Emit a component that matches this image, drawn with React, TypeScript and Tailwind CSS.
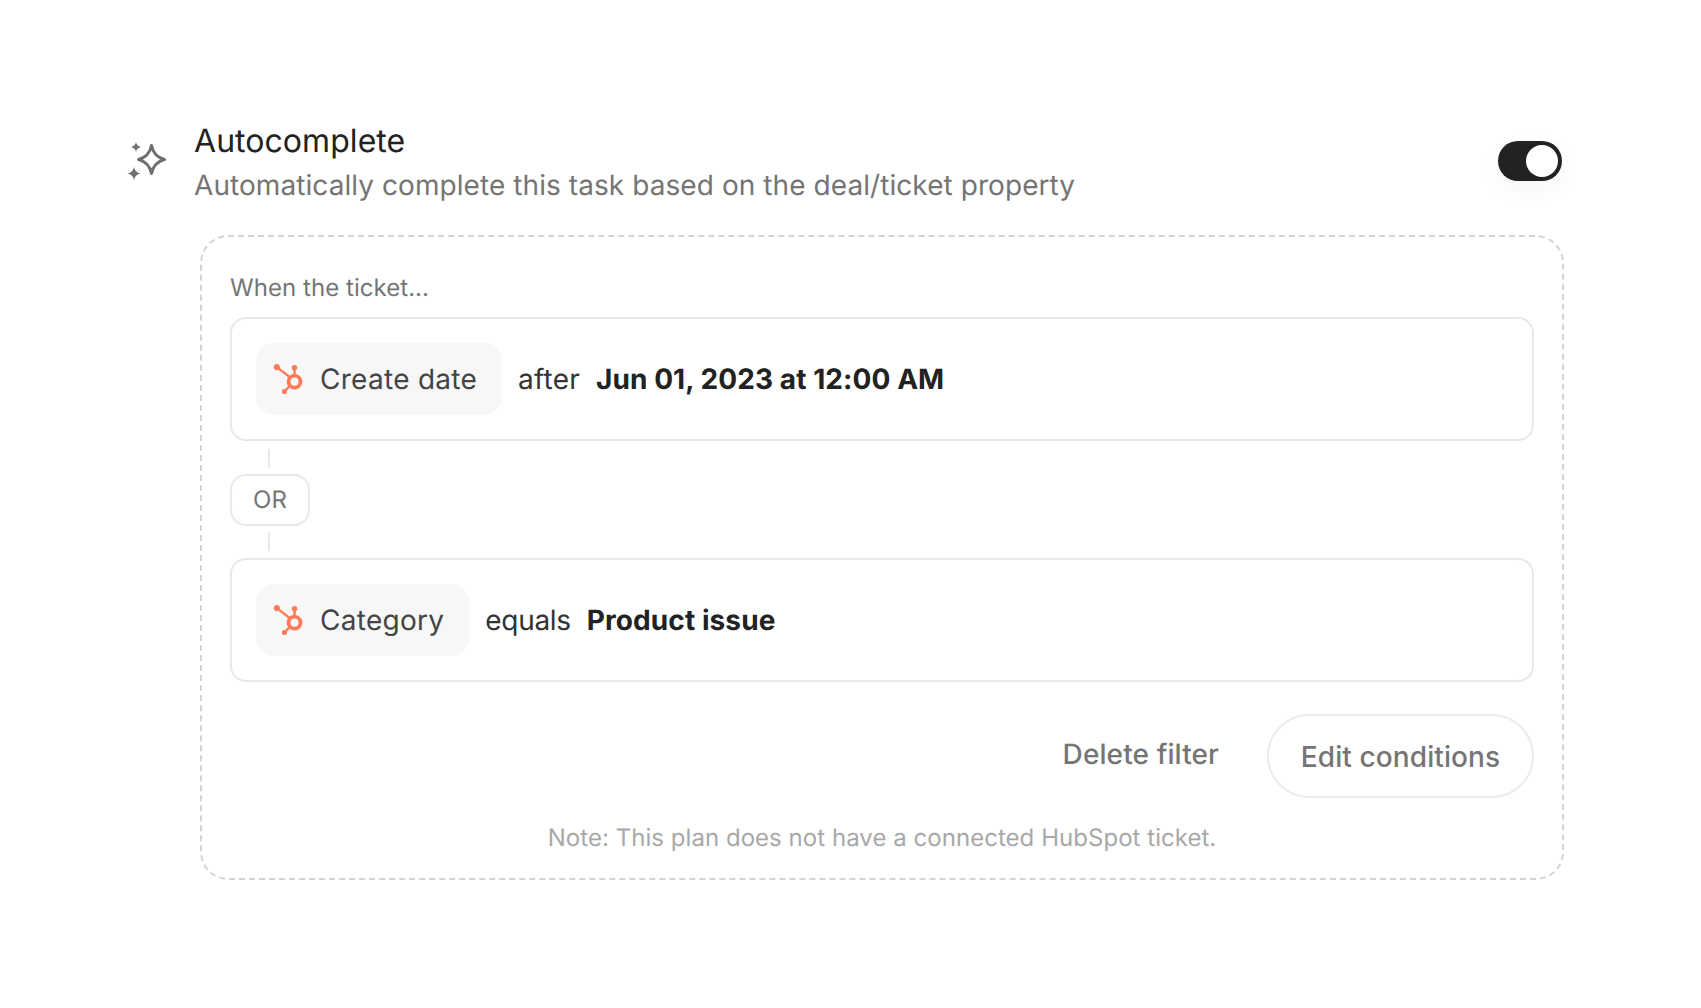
import React from 'react';
import { SiHubspot } from 'react-icons/si';

const Sparkle = () => (
  <svg width="40" height="40" viewBox="0 0 40 40" className="shrink-0 text-[#6f6f6f]">
    <path
      d="M24.500 4.500c1.500 7.500 5.500 12 13 14-7.500 2-11.500 6.500-13 14-1.500-7.500-5.500-12-13-14 7.500-2 11.500-6.500 13-14z"
      fill="none"
      stroke="currentColor"
      strokeWidth="3"
      strokeLinejoin="round"
    />
    <path d="M9 1c.7 3 1.900 4.300 5 5-3.100.7-4.300 2-5 5-.7-3-1.900-4.300-5-5 3.100-.7 4.300-2 5-5z" fill="currentColor" />
    <path d="M7 26c.8 3.700 2.700 5.700 6.500 6.500-3.800.8-5.700 2.800-6.500 6.500-.8-3.700-2.700-5.700-6.500-6.500 3.800-.8 5.700-2.800 6.500-6.500z" fill="currentColor" />
  </svg>
);

interface FilterRowProps {
  field: string;
  op: string;
  value: string;
  opClass: string;
}

const FilterRow = ({ field, op, value, opClass }: FilterRowProps) => (
  <div className="flex h-[124px] items-center rounded-[16px] border-2 border-[#e8e8ea] pl-[24px]">
    <div className="flex h-[72px] items-center gap-[17px] rounded-[18px] bg-[#f7f7f8] pl-[17px] pr-[25px]">
      <SiHubspot size={30} className="text-[#ff7a59]" />
      <span className="text-[28px] tracking-[0.28px] text-[#444444]">{field}</span>
    </div>
    <span className={`ml-[16px] text-[28px] text-[#333333] ${opClass}`}>{op}</span>
    <span className="ml-[16px] text-[28px] font-bold tracking-[0.08px] text-[#222222]">{value}</span>
  </div>
);

const Connector = () => <div className="ml-[38px] h-[19px] w-[2px] bg-[#e8e8ea]" />;

export default function App() {
  return (
    <div className="min-h-[1008px] bg-white pl-[127px] pr-[137px] pt-[120px] font-['Inter',sans-serif] antialiased [text-rendering:geometricPrecision]">
      <div className="flex items-start">
        <div className="mt-[21px]">
          <Sparkle />
        </div>
        <div className="ml-[27px] flex-1">
          <div className="text-[32px] leading-[42px] tracking-[0.05px] text-[#222222]">Autocomplete</div>
          <div className="mt-[2px] text-[28px] leading-[42px] tracking-[0.07px] text-[#757575]">
            Automatically complete this task based on the deal/ticket property
          </div>
        </div>
        <div className="mt-[21px] mr-[2px] flex h-[40px] w-[64px] items-center justify-end rounded-full bg-[#222222] pr-[4px] shadow-[0_8px_24px_rgba(0,0,0,0.04)]">
          <div className="h-[32px] w-[32px] rounded-full bg-white" />
        </div>
      </div>

      <div className="ml-[73px] mt-[29px] flex h-[645px] flex-col rounded-[28px] border-2 border-dashed border-[#d4d4d4] px-[28px] pt-[35px]">
        <div className="text-[24px] leading-[32px] tracking-[0.05px] text-[#757575]">When the ticket...</div>
        <div className="mt-[13px]">
          <FilterRow field="Create date" op="after" value="Jun 01, 2023 at 12:00 AM" opClass="tracking-[0.2px]" />
        </div>
        <div className="mt-[8px]">
          <Connector />
        </div>
        <div className="mt-[6px] flex h-[52px] w-[80px] items-center justify-center rounded-[16px] border-2 border-[#e8e8ea] text-[24px] text-[#757575]">
          OR
        </div>
        <div className="mt-[6px]">
          <Connector />
        </div>
        <div className="mt-[7px]">
          <FilterRow field="Category" op="equals" value="Product issue" opClass="tracking-[-0.3px]" />
        </div>
        <div className="mt-[32px] flex items-center justify-end gap-[48px]">
          <span className="pb-[4px] text-[28px] font-medium tracking-[0.1px] text-[#757575]">Delete filter</span>
          <button className="h-[84px] w-[267px] rounded-full border-2 border-[#ebebeb] pt-[2px] text-[28px] font-medium tracking-[0.1px] text-[#757575]">
            Edit conditions
          </button>
        </div>
        <div className="mt-[24px] text-center text-[24px] leading-[32px] tracking-[0.04px] text-[#a8a8a8]">
          Note: This plan does not have a connected HubSpot ticket.
        </div>
      </div>
    </div>
  );
}
